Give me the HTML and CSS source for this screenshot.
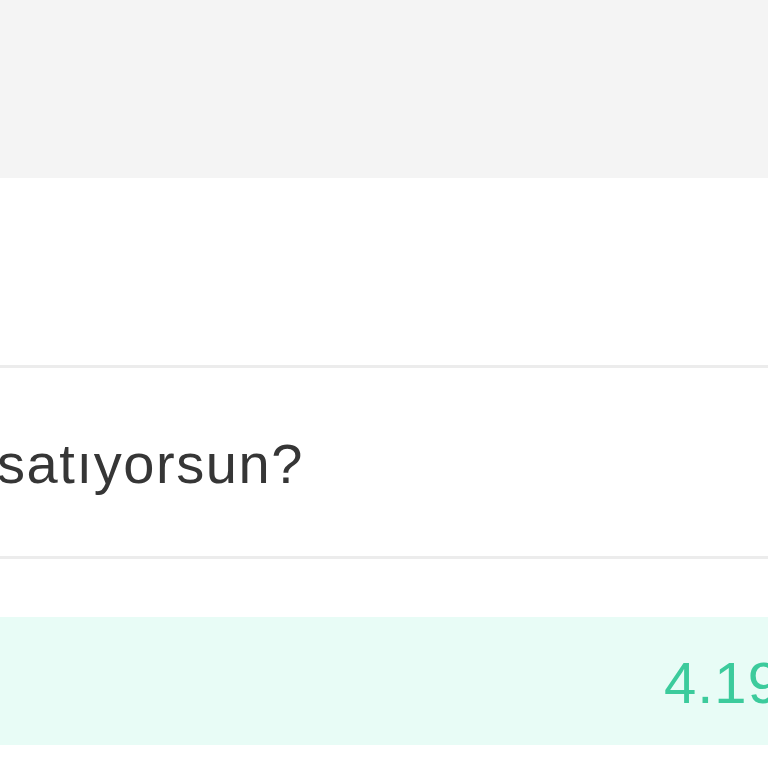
FILE: index.html
```html
<!DOCTYPE html>
<html lang="tr">
<head>
<meta charset="UTF-8">
<meta name="viewport" content="width=device-width, initial-scale=1.0">
<title>İlan Ver</title>
<link rel="stylesheet" href="styles.css">
</head>
<body>
<div class="page">
    <div class="top-bar"></div>

    <div class="row"></div>

    <div class="row question-row">
        <span class="question">satıyorsun?</span>
    </div>

    <div class="spacer"></div>

    <div class="price-bar">
        <span class="price">4.19</span>
    </div>
</div>
</body>
</html>
```

FILE: styles.css
```css
html, body {
    margin: 0;
    padding: 0;
    background-color: #fff;
    overflow: hidden;
}

.page {
    width: 768px;
    height: 768px;
    font-family: "Liberation Sans", Arial, sans-serif;
}

.top-bar {
    height: 178px;
    background-color: #f4f4f4;
}

.row {
    height: 187px;
    border-bottom: 3px solid #ececec;
    background-color: #fff;
}

.question-row {
    display: flex;
    align-items: center;
    padding-top: 4px;
    box-sizing: border-box;
    height: 191px;
    white-space: nowrap;
}

.question {
    font-size: 56px;
    line-height: 1;
    letter-spacing: 1.6px;
    color: #363636;
    margin-left: -3px;
}

.spacer {
    height: 58px;
}

.price-bar {
    height: 128px;
    background-color: #e8fcf6;
    display: flex;
    align-items: center;
    padding-top: 3px;
    box-sizing: border-box;
    white-space: nowrap;
}

.price {
    font-size: 58px;
    line-height: 1;
    letter-spacing: 1px;
    color: #3ccb9c;
    margin-left: 664px;
}
```
